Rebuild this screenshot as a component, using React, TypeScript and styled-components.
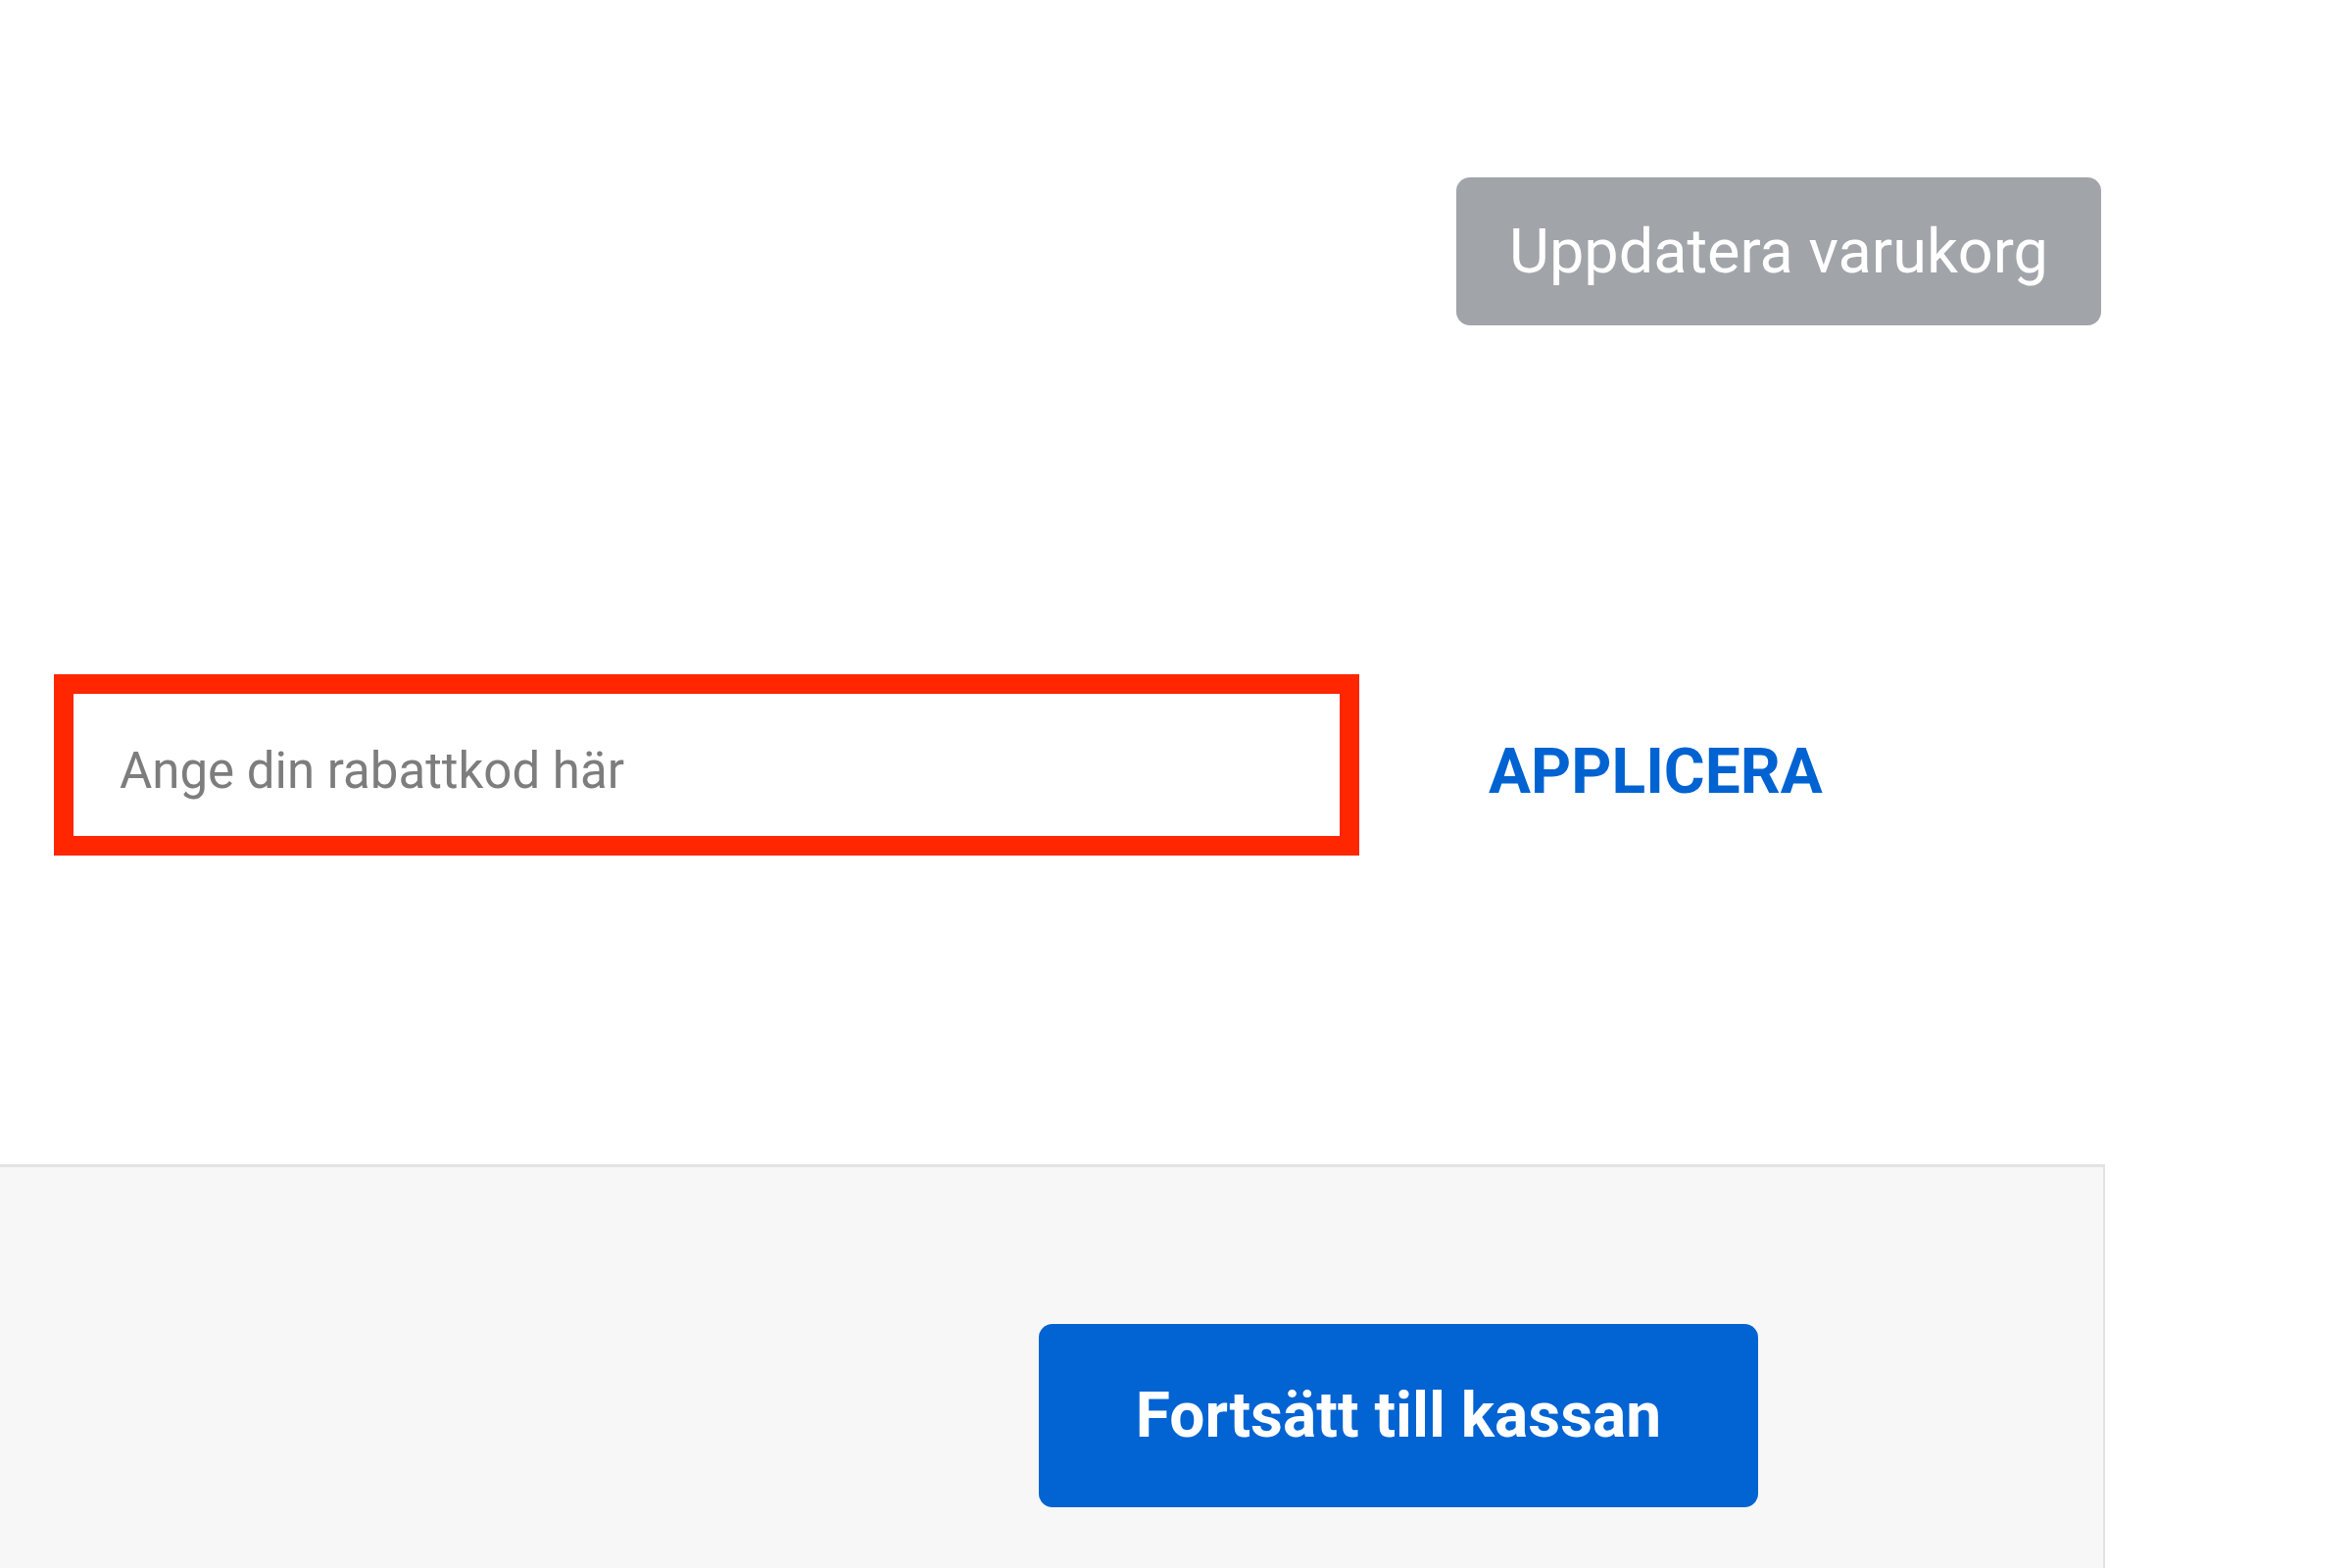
import styled, { createGlobalStyle } from 'styled-components'

const GlobalStyle = createGlobalStyle`
  html, body {
    margin: 0;
    padding: 0;
    background: #ffffff;
    font-family: Roboto, 'Liberation Sans', Arial, sans-serif;
  }

  * {
    box-sizing: border-box;
  }
`

export default function App() {
  return (
    <>
      <GlobalStyle />
      <Page>
        <ActionsRow>
          <UpdateButton type="button">Uppdatera varukorg</UpdateButton>
        </ActionsRow>
        <CouponRow>
          <CouponInput placeholder="Ange din rabattkod här" />
          <ApplyButton type="button">APPLICERA</ApplyButton>
        </CouponRow>
        <CheckoutPanel>
          <CheckoutButton type="button">Fortsätt till kassan</CheckoutButton>
        </CheckoutPanel>
      </Page>
    </>
  )
}

const Page = styled.div`
  display: flex;
  flex-direction: column;
  min-height: 1600px;
  width: 2148px;
`

const ActionsRow = styled.div`
  display: flex;
  flex-direction: row;
  justify-content: flex-end;
  padding: 181px 4px 0 0;
`

const UpdateButton = styled.button`
  background: #a1a5aa;
  border: none;
  border-radius: 14px;
  color: #ffffff;
  font-family: Roboto, 'Liberation Sans', Arial, sans-serif;
  font-size: 63px;
  font-weight: 400;
  height: 151px;
  padding: 0;
  width: 658px;
`

const CouponRow = styled.div`
  align-items: center;
  display: flex;
  flex-direction: row;
  gap: 132px;
  margin-top: 356px;
  padding-left: 55px;
`

const CouponInput = styled.input`
  background: #ffffff;
  border: solid 20px #ff2600;
  color: #333333;
  font-family: Roboto, 'Liberation Sans', Arial, sans-serif;
  font-size: 51px;
  height: 185px;
  outline: none;
  padding: 12px 47px 0;
  width: 1332px;

  &::placeholder {
    color: #7d7d7d;
    opacity: 1;
  }
`

const ApplyButton = styled.button`
  background: none;
  border: none;
  color: #0063d1;
  font-family: Roboto, 'Liberation Sans', Arial, sans-serif;
  font-size: 64px;
  font-weight: 700;
  line-height: 1;
  padding: 15px 0 0;
`

const CheckoutPanel = styled.div`
  background: #f7f7f7;
  border-right: solid 2px #e3e3e3;
  border-top: solid 3px #e3e3e3;
  display: flex;
  flex: 1;
  flex-direction: row;
  margin-top: 315px;
  padding: 160px 0 0 1060px;
`

const CheckoutButton = styled.button`
  align-self: flex-start;
  background: #0263d2;
  border: none;
  border-radius: 14px;
  color: #ffffff;
  font-family: Roboto, 'Liberation Sans', Arial, sans-serif;
  font-size: 64px;
  font-weight: 700;
  height: 187px;
  padding: 0;
  width: 734px;
`
